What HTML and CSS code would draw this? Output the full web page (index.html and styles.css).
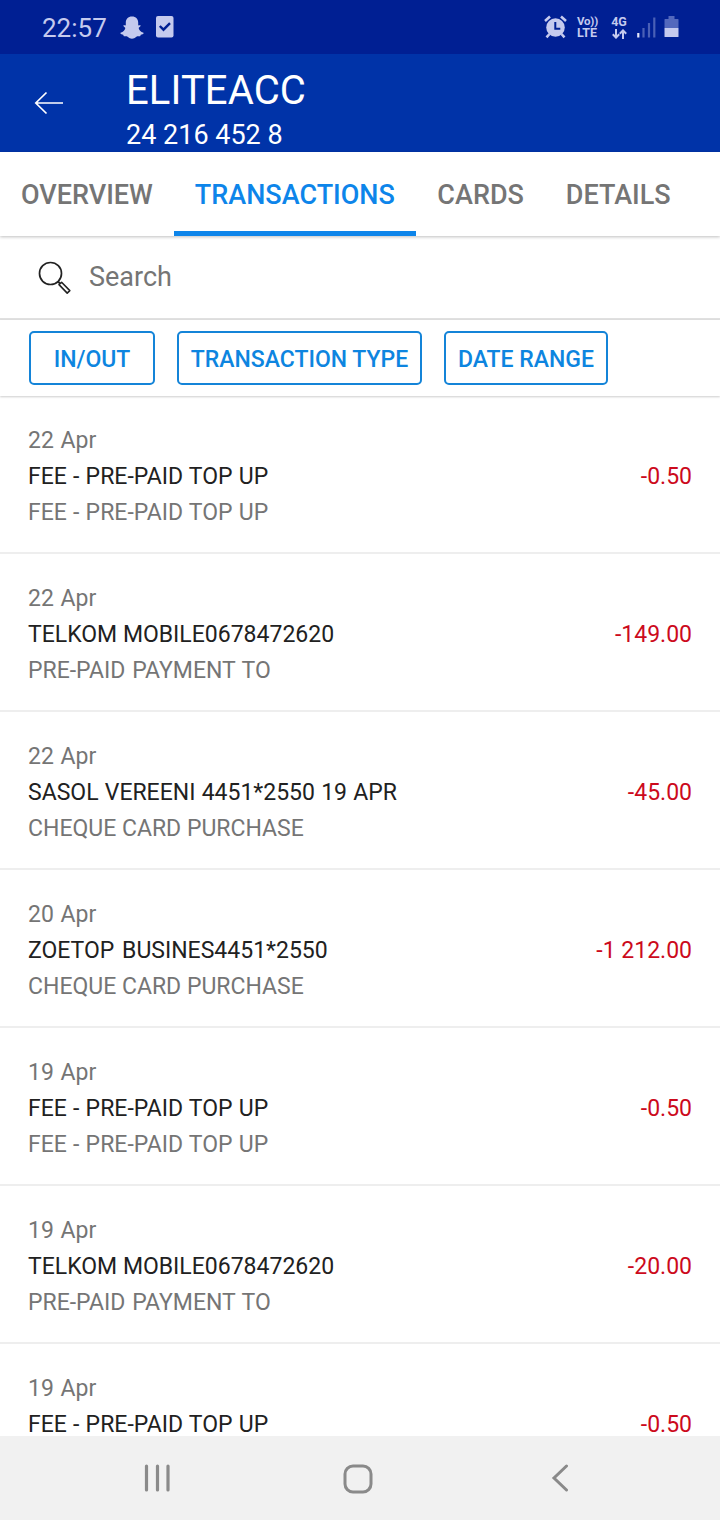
FILE: index.html
```html
<!DOCTYPE html>
<html lang="en">
<head>
    <meta charset="UTF-8">
    <meta name="viewport" content="width=device-width, initial-scale=1.0">
    <title>ELITEACC - Transactions</title>
    <link rel="stylesheet" href="styles.css">
</head>
<body>
    <div class="screen">
        <div class="status-bar">
            <span class="clock">22:57</span>
            <svg class="ghost" width="24" height="23" viewBox="0 0 24 23">
                <path d="M12 .5c4 0 6.200 2.600 6.200 6.200v2.600c.8.400 1.800-.5 2.400.3.500.9-1.900 1.700-1.900 2.500 0 1.600 2 4 4.800 4.700.7 1.200-1.600 1.700-2.700 2-.4.500-.2 1.300-.8 1.500-1.100.2-2.600-.3-4 .7-1.300 1-2.300 1.700-4 1.700s-2.700-.7-4-1.700c-1.400-1-2.900-.5-4-.7-.6-.2-.4-1-.8-1.500C2.100 18.500-.2 18 .5 16.800c2.800-.7 4.800-3.100 4.800-4.700 0-.8-2.400-1.600-1.900-2.500.6-.8 1.600.1 2.400-.3V6.700C5.800 3.100 8 .5 12 .5z" fill="#c5caee"/>
            </svg>
            <svg class="check" width="18" height="22" viewBox="0 0 18 22">
                <rect width="17.500" height="21.500" rx="2" fill="#c5caee"/>
                <path d="M3.800 10l3.700 3.700 6.500-6.500" fill="none" stroke="#001f93" stroke-width="2.400"/>
            </svg>
            <div class="status-right">
                <svg width="23" height="24" viewBox="0 0 23 24">
                    <path d="M1 6l5-4.500M22 6l-5-4.500M5.500 19l-3 3.300M17.500 19l3 3.300" stroke="#c5caee" stroke-width="2.600"/>
                    <circle cx="11.500" cy="12.500" r="9.300" fill="#c5caee"/>
                    <path d="M11.300 7v6.700h5" fill="none" stroke="#001f93" stroke-width="2"/>
                </svg>
                <div class="net volte"><span class="vo">Vo))</span><span>LTE</span></div>
                <div class="net data">
                    <span>4G</span>
                    <svg width="15" height="10" viewBox="0 0 15 10">
                        <path d="M4 0v8.500M.8 5.200L4 8.600l3.200-3.400M11 10V1.500M7.800 4.800L11 1.400l3.200 3.400" fill="none" stroke="#c5caee" stroke-width="2"/>
                    </svg>
                </div>
                <svg class="signal" width="19" height="21" viewBox="0 0 19 21">
                    <path d="M1.300 16v4.500" stroke="#e4e7fa" stroke-width="2.200"/>
                    <path d="M6.500 11v9.500M12 6v14.500M17.300 .5v20" stroke="#4a60b6" stroke-width="2.200"/>
                </svg>
                <svg class="battery" width="15" height="22" viewBox="0 0 15 22">
                    <path d="M4.500 0h6v3H14q.5 0 .5.500V12H.5V3.500Q.5 3 1 3h3.500z" fill="#5368bd"/>
                    <path d="M.5 12h14v8.500q0 .5-.5.500H1q-.5 0-.5-.5z" fill="#c5caee"/>
                </svg>
            </div>
        </div>

        <div class="header">
            <svg class="back" width="30" height="24" viewBox="0 0 30 24">
                <path d="M29 12H1.500M12.500 1.500L1.800 12l10.700 10.500" fill="none" stroke="#fff" stroke-width="1.700"/>
            </svg>
            <div class="account">
                <div class="account-name">ELITEACC</div>
                <div class="account-number">24 216 452 8</div>
            </div>
        </div>

        <div class="tabs">
            <div class="tab">OVERVIEW</div>
            <div class="tab active">TRANSACTIONS</div>
            <div class="tab">CARDS</div>
            <div class="tab">DETAILS</div>
        </div>

        <div class="search">
            <svg width="34" height="34" viewBox="0 0 34 34" fill="none" stroke="#222">
                <circle cx="12.500" cy="12.500" r="11" stroke-width="1.700"/>
                <path d="M20 20.500l2 2" stroke-width="1.800"/>
                <path d="M21 23.600l2.600-2.300 8.200 8.300-2.600 2.500z" stroke-width="1.600" stroke-linejoin="round"/>
            </svg>
            <span>Search</span>
        </div>

        <div class="filters">
            <div class="chip in-out">IN/OUT</div>
            <div class="chip type">TRANSACTION TYPE</div>
            <div class="chip range">DATE RANGE</div>
        </div>

        <div class="list">
            <div class="row">
                <div class="date">22 Apr</div>
                <div class="main"><span class="fee">FEE - PRE-PAID TOP UP</span><span class="amount">-0.50</span></div>
                <div class="desc fee">FEE - PRE-PAID TOP UP</div>
            </div>
            <div class="row">
                <div class="date">22 Apr</div>
                <div class="main"><span>TELKOM MOBILE0678472620</span><span class="amount">-149.00</span></div>
                <div class="desc prepaid">PRE-PAID PAYMENT TO</div>
            </div>
            <div class="row">
                <div class="date">22 Apr</div>
                <div class="main"><span class="fee">SASOL VEREENI 4451*2550 19 APR</span><span class="amount">-45.00</span></div>
                <div class="desc">CHEQUE CARD PURCHASE</div>
            </div>
            <div class="row">
                <div class="date">20 Apr</div>
                <div class="main"><span class="shop">ZOETOP BUSINES4451*2550</span><span class="amount">-1 212.00</span></div>
                <div class="desc">CHEQUE CARD PURCHASE</div>
            </div>
            <div class="row">
                <div class="date">19 Apr</div>
                <div class="main"><span class="fee">FEE - PRE-PAID TOP UP</span><span class="amount">-0.50</span></div>
                <div class="desc fee">FEE - PRE-PAID TOP UP</div>
            </div>
            <div class="row">
                <div class="date">19 Apr</div>
                <div class="main"><span>TELKOM MOBILE0678472620</span><span class="amount">-20.00</span></div>
                <div class="desc prepaid">PRE-PAID PAYMENT TO</div>
            </div>
            <div class="row">
                <div class="date">19 Apr</div>
                <div class="main"><span class="fee">FEE - PRE-PAID TOP UP</span><span class="amount">-0.50</span></div>
            </div>
        </div>

        <div class="nav-bar">
            <svg width="28" height="28" viewBox="0 0 28 28">
                <path d="M2.500 2v24M13.500 2v24M24 2v24" stroke="#8a8a8a" stroke-width="3.200" stroke-linecap="round"/>
            </svg>
            <svg class="home" width="30" height="30" viewBox="0 0 30 30">
                <rect x="2" y="2" width="26" height="26" rx="8" fill="none" stroke="#8a8a8a" stroke-width="3"/>
            </svg>
            <svg class="nav-back" width="18" height="28" viewBox="0 0 18 28">
                <path d="M15.500 2L3 14l12.500 12" fill="none" stroke="#8a8a8a" stroke-width="3" stroke-linecap="round"/>
            </svg>
        </div>
    </div>
</body>
</html>
```
FILE: styles.css
```css
* {
    box-sizing: border-box;
}
body {
    font-family: Roboto, sans-serif;
    margin: 0;
    background-color: #fff;
}
svg {
    display: block;
    flex: none;
}
.screen {
    width: 720px;
    height: 1520px;
    display: flex;
    flex-direction: column;
    overflow: hidden;
    white-space: nowrap;
}
.status-bar {
    flex: none;
    height: 54px;
    background-color: #001f93;
    color: #c5caee;
    display: flex;
    align-items: center;
    padding: 0 41px 0 42px;
}
.clock {
    font-size: 26px;
    width: 78px;
    padding-top: 2px;
}
.check {
    margin-left: 12px;
}
.status-right {
    margin-left: auto;
    display: flex;
    align-items: center;
}
.net {
    display: flex;
    flex-direction: column;
    font-size: 12.5px;
    font-weight: 700;
    line-height: 12px;
}
.volte {
    margin-left: 10px;
    width: 22px;
}
.vo {
    font-size: 11.5px;
    letter-spacing: -0.2px;
}
.data {
    margin-left: 11px;
    width: 18px;
    align-items: center;
}
.data svg {
    margin-top: 1px;
}
.signal {
    margin-left: 9px;
    margin-top: 1px;
}
.battery {
    margin-left: 8px;
}
.header {
    flex: none;
    height: 98px;
    background-color: #0033a8;
    color: #fff;
    display: flex;
    align-items: center;
    padding-left: 34px;
}
.account {
    margin-left: 62px;
    padding-top: 16px;
}
.account-name {
    font-size: 40px;
    line-height: 48px;
    letter-spacing: 0.1px;
}
.account-number {
    font-size: 27px;
    line-height: 40px;
}
.tabs {
    flex: none;
    height: 84px;
    display: flex;
    box-shadow: 0 1px 3px rgba(0,0,0,0.25);
}
.tab {
    padding: 0 21px;
    font-size: 27px;
    font-weight: 500;
    line-height: 86px;
    color: #757575;
}
.tab.active {
    color: #0d85ea;
    border-bottom: 5px solid #0d85ea;
    margin-right: 0.5px;
}
.search {
    flex: none;
    height: 84px;
    border-bottom: 2px solid #e0e0e0;
    display: flex;
    align-items: center;
    padding-left: 37px;
    font-size: 27px;
    color: #757575;
}
.search svg {
    margin: 2px 0 0 0.5px;
}
.search span {
    margin-left: 17.5px;
}
.filters {
    flex: none;
    height: 76px;
    display: flex;
    align-items: center;
    padding-left: 29px;
    box-shadow: 0 1px 2px rgba(0,0,0,0.2);
}
.chip {
    height: 54px;
    border: 2px solid #1484d8;
    border-radius: 5px;
    color: #0d85e0;
    font-size: 23px;
    font-weight: 500;
    line-height: 53px;
    text-align: center;
}
.in-out {
    width: 126px;
}
.type {
    width: 245px;
    margin-left: 22px;
}
.range {
    width: 164px;
    margin-left: 22px;
}
.list {
    flex: 1;
    min-height: 0;
    overflow: hidden;
}
.row {
    height: 158px;
    padding: 27px 28px 0;
    border-bottom: 2px solid #eee;
    font-size: 23px;
    line-height: 36px;
    color: #757575;
}
.main {
    display: flex;
    justify-content: space-between;
    color: #212121;
}
.fee {
    word-spacing: 0.5px;
}
.date, .prepaid {
    word-spacing: 1px;
}
.shop {
    word-spacing: 2px;
}
.amount {
    color: #cc0a1c;
}
.nav-bar {
    flex: none;
    height: 84px;
    background-color: #f1f1f1;
    display: flex;
    align-items: center;
    padding-left: 144px;
}
.home {
    margin: 1px 0 0 171px;
}
.nav-back {
    margin-left: 178px;
}
```
